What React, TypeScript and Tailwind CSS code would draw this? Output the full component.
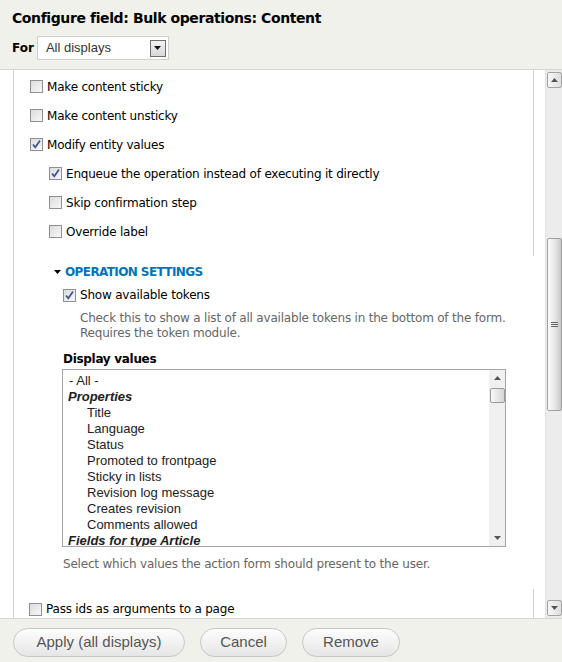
import React from "react";

const ui = { fontFamily: '"DejaVu Sans", Verdana, sans-serif' };
const arial = { fontFamily: '"Liberation Sans", Arial, sans-serif' };

function Checkbox({ checked }: { checked?: boolean }) {
  return (
    <span className="relative inline-flex h-[13px] w-[13px] shrink-0 items-center justify-center border border-[#8e8f8f] bg-gradient-to-br from-[#dcdcdc] to-[#f8f8f8]">
      {checked && (
        <svg width="11" height="11" viewBox="0 0 11 11" className="absolute">
          <path d="M2 5.5 L4.3 8.3 L9 1.5" fill="none" stroke="#3e5897" strokeWidth="1.8" />
        </svg>
      )}
    </span>
  );
}

function CheckRow({ label, checked, indent }: { label: string; checked?: boolean; indent?: boolean }) {
  return (
    <div className={`flex h-[29px] items-center gap-[4px] ${indent ? "pl-[35px]" : "pl-[16px]"}`}>
      <Checkbox checked={checked} />
      <span className="text-[12px] tracking-[-0.2px] text-black">{label}</span>
    </div>
  );
}

function ScrollArrow({ down, small }: { down?: boolean; small?: boolean }) {
  return (
    <div
      className={`flex items-center justify-center ${
        small ? "h-[16px] w-[16px]" : "h-[16px] w-[15px] rounded-[2px] border border-[#a3a3a3] bg-gradient-to-r from-[#f6f6f6] to-[#dedede]"
      }`}
    >
      <svg width="7" height="4" viewBox="0 0 7 4">
        {down ? <path d="M0 0 H7 L3.5 4 Z" fill="#555" /> : <path d="M0 4 H7 L3.5 0 Z" fill="#555" />}
      </svg>
    </div>
  );
}

const values: { text: string; kind: "all" | "group" | "item" }[] = [
  { text: "- All -", kind: "all" },
  { text: "Properties", kind: "group" },
  { text: "Title", kind: "item" },
  { text: "Language", kind: "item" },
  { text: "Status", kind: "item" },
  { text: "Promoted to frontpage", kind: "item" },
  { text: "Sticky in lists", kind: "item" },
  { text: "Revision log message", kind: "item" },
  { text: "Creates revision", kind: "item" },
  { text: "Comments allowed", kind: "item" },
  { text: "Fields for type Article", kind: "group" },
];

const buttons = [
  { label: "Apply (all displays)", w: "w-[172px]" },
  { label: "Cancel", w: "w-[87px]" },
  { label: "Remove", w: "w-[98px]" },
];

export default function App() {
  return (
    <div className="flex h-[662px] w-[562px] flex-col overflow-hidden bg-white" style={ui}>
      {/* header */}
      <div className="h-[70px] shrink-0 border-b border-[#d4d4d0] bg-[#f1f1ec] px-[12px]">
        <h1 className="pt-[8px] text-[14px] font-bold leading-[20px] tracking-[-0.4px] text-black">
          Configure field: Bulk operations: Content
        </h1>
        <div className="mt-[8px] flex items-center gap-[3px]">
          <span className="text-[12px] font-bold text-black">For</span>
          <div className="flex h-[24px] w-[132px] items-center justify-between border border-[#cfcfcf] bg-white pl-[8px] pr-[2px]" style={arial}>
            <span className="text-[13px] text-[#333]">All displays</span>
            <div className="flex h-[17px] w-[16px] items-center justify-center border border-[#6f6f6f] bg-gradient-to-b from-[#f2f2f2] to-[#d8d8d8]">
              <svg width="7" height="4" viewBox="0 0 7 4">
                <path d="M0 0 H7 L3.5 4 Z" fill="#111" />
              </svg>
            </div>
          </div>
        </div>
      </div>

      {/* scroll area */}
      <div className="flex h-[548px] shrink-0">
        <div className="flex w-[545px] flex-col pl-[13px]">
          <div className="flex h-full w-[521px] flex-col border-l border-[#cfcfcf]">
            <div className="h-[186px] border-r border-[#cfcfcf] pt-[2px]">
              <CheckRow label="Make content sticky" />
              <CheckRow label="Make content unsticky" />
              <CheckRow label="Modify entity values" checked />
              <CheckRow label="Enqueue the operation instead of executing it directly" checked indent />
              <CheckRow label="Skip confirmation step" indent />
              <CheckRow label="Override label" indent />
            </div>

            <div className="flex h-[333px] flex-col pl-[40px]">
              <div className="mt-[8px] flex h-[16px] items-center gap-[4px]">
                <svg width="7" height="4" viewBox="0 0 7 4">
                  <path d="M0 0 H7 L3.5 4 Z" fill="#000" />
                </svg>
                <span className="text-[12px] font-bold tracking-[-0.6px] text-[#0074bd]">OPERATION SETTINGS</span>
              </div>
              <div className="ml-[9px] mt-[7px] flex h-[16px] items-center gap-[4px]">
                <Checkbox checked />
                <span className="text-[12px] tracking-[-0.2px] text-black">Show available tokens</span>
              </div>
              <p className="ml-[26px] mt-[8px] text-[12px] leading-[15px] tracking-[-0.2px] text-[#666]">
                Check this to show a list of all available tokens in the bottom of the form.
                <br />
                Requires the token module.
              </p>
              <div className="ml-[9px] mt-[9px] text-[12px] font-bold tracking-[-0.3px] text-black">Display values</div>
              <div className="ml-[8px] mt-[1px] flex h-[178px] w-[444px] border border-[#a5a5a5] bg-white" style={arial}>
                <div className="flex-1 overflow-hidden pl-[5px] pt-[3px] text-[13px] leading-[16px] text-[#222]">
                  {values.map((v) =>
                    v.kind === "group" ? (
                      <div key={v.text} className="font-bold italic">
                        {v.text}
                      </div>
                    ) : (
                      <div key={v.text} className={v.kind === "item" ? "pl-[19px]" : "pl-[1px]"}>
                        {v.text}
                      </div>
                    )
                  )}
                </div>
                <div className="flex w-[16px] flex-col bg-[#f0f0f0]">
                  <ScrollArrow small />
                  <div className="flex-1">
                    <div className="mx-auto mt-[2px] h-[15px] w-[15px] rounded-[2px] border border-[#9a9a9a] bg-gradient-to-r from-[#f8f8f8] to-[#d6d6d6]" />
                  </div>
                  <ScrollArrow small down />
                </div>
              </div>
              <p className="ml-[9px] mt-[8px] text-[12px] tracking-[-0.2px] text-[#666]">
                Select which values the action form should present to the user.
              </p>
            </div>

            <div className="flex flex-1 items-end border-r border-[#cfcfcf] pl-[15px]">
              <div className="flex h-[18px] items-center gap-[4px]">
                <Checkbox />
                <span className="text-[12px] tracking-[-0.2px] text-black">Pass ids as arguments to a page</span>
              </div>
            </div>
          </div>
        </div>

        {/* outer scrollbar */}
        <div className="flex w-[17px] flex-col items-center border-l border-[#e2e2e2] bg-[#ececec] py-[2px]">
          <ScrollArrow />
          <div className="flex-1 pt-[150px]">
            <div className="flex h-[173px] w-[15px] items-center justify-center rounded-[2px] border border-[#a0a0a0] bg-gradient-to-r from-[#fbfbfb] via-[#e8e8e8] to-[#c9c9c9]">
              <svg width="7" height="6" viewBox="0 0 7 6">
                <path d="M0 0.5 H7 M0 2.5 H7 M0 4.5 H7" stroke="#666" strokeWidth="1" />
              </svg>
            </div>
          </div>
          <ScrollArrow down />
        </div>
      </div>

      {/* footer */}
      <div className="flex flex-1 items-start gap-[15px] border-t border-[#d4d4d0] bg-[#f1f1ec] pl-[13px] pt-[9px]" style={arial}>
        {buttons.map((b) => (
          <button
            key={b.label}
            className={`h-[29px] ${b.w} rounded-full border border-[#c6c6c6] bg-gradient-to-b from-[#fdfdfd] to-[#e6e6e6] text-[15px] text-[#555]`}
          >
            {b.label}
          </button>
        ))}
      </div>
    </div>
  );
}
